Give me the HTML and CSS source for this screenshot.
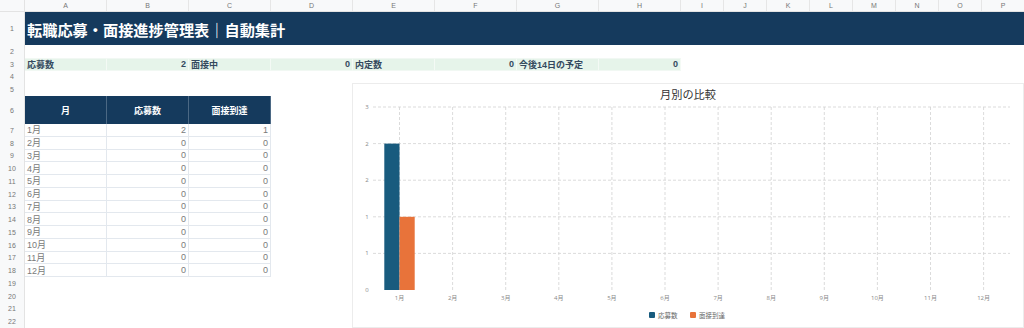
FILE: index.html
```html
<!DOCTYPE html>
<html lang="ja">
<head>
<meta charset="UTF-8">
<title>転職応募・面接進捗管理表</title>
<link rel="stylesheet" href="styles.css">
</head>
<body>

<div class="sheet">
    <div class="row col-head">
        <div class="rh"></div>
        <div class="c w">A</div><div class="c w">B</div><div class="c w">C</div><div class="c w">D</div>
        <div class="c w">E</div><div class="c w">F</div><div class="c w">G</div><div class="c w">H</div>
        <div class="c n">I</div><div class="c n">J</div><div class="c n">K</div><div class="c n">L</div>
        <div class="c n">M</div><div class="c n">N</div><div class="c n">O</div><div class="c n">P</div>
    </div>

    <div class="row r-title">
        <div class="rh">1</div>
        <div class="title">転職応募・面接進捗管理表｜自動集計</div>
    </div>
    <div class="row"><div class="rh">2</div></div>
    <div class="row summary">
        <div class="rh">3</div>
        <div class="c w">応募数</div><div class="c w num">2</div>
        <div class="c w">面接中</div><div class="c w num">0</div>
        <div class="c w">内定数</div><div class="c w num">0</div>
        <div class="c w">今後14日の予定</div><div class="c w num">0</div>
    </div>
    <div class="row"><div class="rh">4</div></div>
    <div class="row"><div class="rh">5</div></div>
    <div class="row r-head">
        <div class="rh">6</div>
        <div class="c w">月</div><div class="c w">応募数</div><div class="c w">面接到達</div>
    </div>
    <div class="row data"><div class="rh">7</div><div class="c w">1月</div><div class="c w num">2</div><div class="c w num">1</div></div>
    <div class="row data"><div class="rh">8</div><div class="c w">2月</div><div class="c w num">0</div><div class="c w num">0</div></div>
    <div class="row data"><div class="rh">9</div><div class="c w">3月</div><div class="c w num">0</div><div class="c w num">0</div></div>
    <div class="row data"><div class="rh">10</div><div class="c w">4月</div><div class="c w num">0</div><div class="c w num">0</div></div>
    <div class="row data"><div class="rh">11</div><div class="c w">5月</div><div class="c w num">0</div><div class="c w num">0</div></div>
    <div class="row data"><div class="rh">12</div><div class="c w">6月</div><div class="c w num">0</div><div class="c w num">0</div></div>
    <div class="row data"><div class="rh">13</div><div class="c w">7月</div><div class="c w num">0</div><div class="c w num">0</div></div>
    <div class="row data"><div class="rh">14</div><div class="c w">8月</div><div class="c w num">0</div><div class="c w num">0</div></div>
    <div class="row data"><div class="rh">15</div><div class="c w">9月</div><div class="c w num">0</div><div class="c w num">0</div></div>
    <div class="row data"><div class="rh">16</div><div class="c w">10月</div><div class="c w num">0</div><div class="c w num">0</div></div>
    <div class="row data"><div class="rh">17</div><div class="c w">11月</div><div class="c w num">0</div><div class="c w num">0</div></div>
    <div class="row data"><div class="rh">18</div><div class="c w">12月</div><div class="c w num">0</div><div class="c w num">0</div></div>
    <div class="row"><div class="rh">19</div></div>
    <div class="row"><div class="rh">20</div></div>
    <div class="row"><div class="rh">21</div></div>
    <div class="row"><div class="rh">22</div></div>

    <!-- floating chart over the cells -->
    <div class="chart">
        <svg width="672" height="245" viewBox="0 0 672 245">
            <text class="chart-title" x="336" y="16" text-anchor="middle">月別の比較</text>

            <g class="grid">
                <line x1="21" y1="24" x2="658" y2="24"/>
                <line x1="21" y1="60.6" x2="658" y2="60.6"/>
                <line x1="21" y1="97.2" x2="658" y2="97.2"/>
                <line x1="21" y1="133.8" x2="658" y2="133.8"/>
                <line x1="21" y1="170.4" x2="658" y2="170.4"/>
                <line x1="47.5" y1="24" x2="47.5" y2="207"/>
                <line x1="100.6" y1="24" x2="100.6" y2="207"/>
                <line x1="153.7" y1="24" x2="153.7" y2="207"/>
                <line x1="206.8" y1="24" x2="206.8" y2="207"/>
                <line x1="259.9" y1="24" x2="259.9" y2="207"/>
                <line x1="313" y1="24" x2="313" y2="207"/>
                <line x1="366.1" y1="24" x2="366.1" y2="207"/>
                <line x1="419.2" y1="24" x2="419.2" y2="207"/>
                <line x1="472.3" y1="24" x2="472.3" y2="207"/>
                <line x1="525.4" y1="24" x2="525.4" y2="207"/>
                <line x1="578.5" y1="24" x2="578.5" y2="207"/>
                <line x1="631.6" y1="24" x2="631.6" y2="207"/>
            </g>

            <g class="y-labels" text-anchor="middle">
                <text x="15" y="26">3</text>
                <text x="15" y="62.6">2</text>
                <text x="15" y="99.2">2</text>
                <text x="15" y="135.8">1</text>
                <text x="15" y="172.4">1</text>
                <text x="15" y="209">0</text>
            </g>

            <rect class="bar-a" x="32.3" y="60.6" width="15.2" height="146.4"/>
            <rect class="bar-b" x="47.5" y="133.8" width="15.2" height="73.2"/>

            <g class="x-labels" text-anchor="middle">
                <text x="47.5" y="217">1月</text>
                <text x="100.6" y="217">2月</text>
                <text x="153.7" y="217">3月</text>
                <text x="206.8" y="217">4月</text>
                <text x="259.9" y="217">5月</text>
                <text x="313" y="217">6月</text>
                <text x="366.1" y="217">7月</text>
                <text x="419.2" y="217">8月</text>
                <text x="472.3" y="217">9月</text>
                <text x="525.4" y="217">10月</text>
                <text x="578.5" y="217">11月</text>
                <text x="631.6" y="217">12月</text>
            </g>

            <g class="legend">
                <rect class="bar-a" x="297" y="229" width="6" height="6" rx="1"/>
                <text x="306" y="234.5">応募数</text>
                <rect class="bar-b" x="338" y="229" width="6" height="6" rx="1"/>
                <text x="347" y="234.5">面接到達</text>
            </g>
        </svg>
    </div>
</div>

</body>
</html>
```

FILE: styles.css
```css
/* Spreadsheet look */
body {
    margin: 0;
    background-color: #fff;
    font-family: "Liberation Sans", "Noto Sans CJK JP", sans-serif;
    overflow: hidden;
}

.sheet {
    position: relative;
    width: 1024px;
    height: 328px;
    overflow: hidden;
}

.row {
    display: flex;
    height: 12.75px;
}

.rh {
    flex: 0 0 25px;
    box-sizing: border-box;
    background-color: #f8f9fa;
    border-right: 1px solid #e3e3e3;
    color: #777;
    font-size: 7px;
    display: flex;
    align-items: center;
    justify-content: center;
}

.c {
    box-sizing: border-box;
    display: flex;
    align-items: center;
    padding: 0 2px;
    white-space: nowrap;
    overflow: hidden;
}

.w {
    flex: 0 0 82px;
}

.n {
    flex: 0 0 43px;
}

.num {
    justify-content: flex-end;
}

/* column letters */
.col-head {
    height: 12px;
    background-color: #f8f9fa;
    border-bottom: 1px solid #e3e3e3;
    box-sizing: border-box;
}

.col-head .c {
    justify-content: center;
    color: #777;
    font-size: 7px;
    border-right: 1px solid #e6e6e6;
}

/* title band */
.r-title {
    height: 33px;
}

.title {
    flex: 1;
    background-color: #153a5d;
    color: #fff;
    font-size: 15.2px;
    font-weight: bold;
    display: flex;
    align-items: center;
    padding-left: 2px;
}

/* summary row */
.summary .c {
    background-color: #e6f4ea;
    border-right: 1px solid #f4faf5;
    border-top: 1px solid #f1f8f3;
    border-bottom: 1px solid #f1f8f3;
    color: #34495e;
    font-size: 9px;
    font-weight: bold;
}

/* monthly table */
.r-head {
    height: 28px;
}

.r-head .c {
    background-color: #153a5d;
    border-right: 1px solid #4b6884;
    color: #fff;
    font-size: 9px;
    font-weight: bold;
    justify-content: center;
}

.data .c {
    color: #7a7a7a;
    font-size: 9px;
    border-bottom: 1px solid #e3e8ee;
    border-right: 1px solid #e3e8ee;
}

/* chart */
.chart {
    position: absolute;
    left: 352px;
    top: 83px;
    width: 672px;
    height: 245px;
    box-sizing: border-box;
    border: 1px solid #ececec;
    background-color: #fff;
}

.chart svg {
    display: block;
    position: absolute;
    left: -1px;
    top: -1px;
    font-family: "Open Sans", "Noto Sans CJK JP", sans-serif;
}

.chart-title {
    font-size: 11.2px;
    fill: #333;
}

.grid line {
    stroke: #d2d2d2;
    stroke-width: 0.8;
    stroke-dasharray: 3 2;
}

.y-labels text,
.x-labels text {
    font-size: 6px;
    fill: #888;
}

.legend text {
    font-size: 6.5px;
    fill: #666;
}

.bar-a {
    fill: #185b7e;
}

.bar-b {
    fill: #e8733a;
}
```
